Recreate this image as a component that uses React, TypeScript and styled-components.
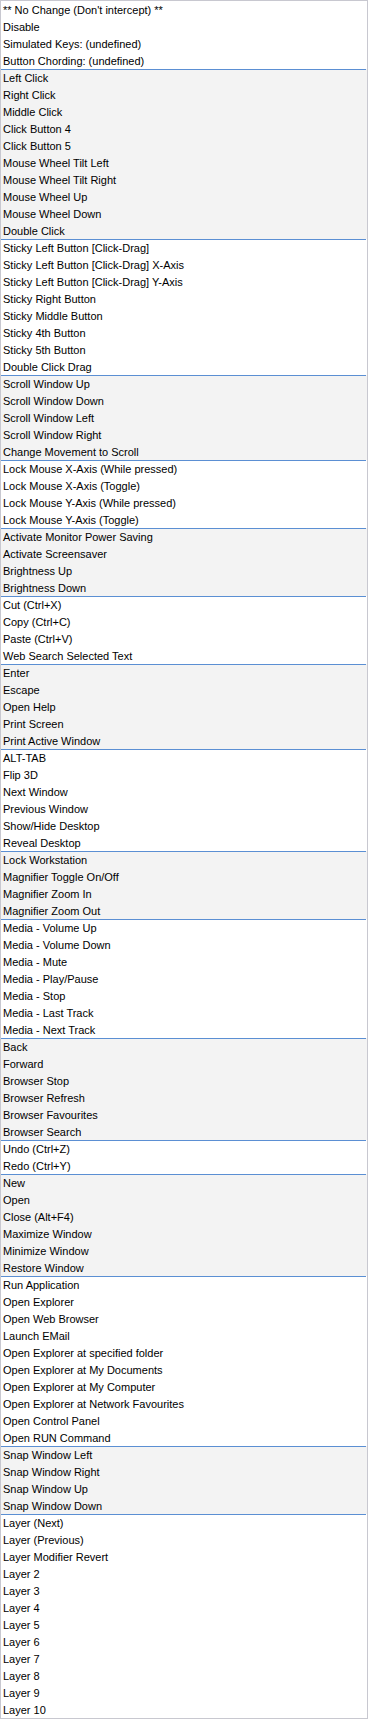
import React from 'react'
import styled, { createGlobalStyle } from 'styled-components'

const GlobalStyle = createGlobalStyle`
  html, body {
    margin: 0;
    padding: 0;
    background: #ffffff;
  }
`

const groups: string[][] = [
  ["** No Change (Don't intercept) **", 'Disable', 'Simulated Keys: (undefined)', 'Button Chording: (undefined)'],
  [
    'Left Click',
    'Right Click',
    'Middle Click',
    'Click Button 4',
    'Click Button 5',
    'Mouse Wheel Tilt Left',
    'Mouse Wheel Tilt Right',
    'Mouse Wheel Up',
    'Mouse Wheel Down',
    'Double Click',
  ],
  [
    'Sticky Left Button [Click-Drag]',
    'Sticky Left Button [Click-Drag] X-Axis',
    'Sticky Left Button [Click-Drag] Y-Axis',
    'Sticky Right Button',
    'Sticky Middle Button',
    'Sticky 4th Button',
    'Sticky 5th Button',
    'Double Click Drag',
  ],
  ['Scroll Window Up', 'Scroll Window Down', 'Scroll Window Left', 'Scroll Window Right', 'Change Movement to Scroll'],
  [
    'Lock Mouse X-Axis (While pressed)',
    'Lock Mouse X-Axis (Toggle)',
    'Lock Mouse Y-Axis (While pressed)',
    'Lock Mouse Y-Axis (Toggle)',
  ],
  ['Activate Monitor Power Saving', 'Activate Screensaver', 'Brightness Up', 'Brightness Down'],
  ['Cut (Ctrl+X)', 'Copy (Ctrl+C)', 'Paste (Ctrl+V)', 'Web Search Selected Text'],
  ['Enter', 'Escape', 'Open Help', 'Print Screen', 'Print Active Window'],
  ['ALT-TAB', 'Flip 3D', 'Next Window', 'Previous Window', 'Show/Hide Desktop', 'Reveal Desktop'],
  ['Lock Workstation', 'Magnifier Toggle On/Off', 'Magnifier Zoom In', 'Magnifier Zoom Out'],
  [
    'Media - Volume Up',
    'Media - Volume Down',
    'Media - Mute',
    'Media - Play/Pause',
    'Media - Stop',
    'Media - Last Track',
    'Media - Next Track',
  ],
  ['Back', 'Forward', 'Browser Stop', 'Browser Refresh', 'Browser Favourites', 'Browser Search'],
  ['Undo (Ctrl+Z)', 'Redo (Ctrl+Y)'],
  ['New', 'Open', 'Close (Alt+F4)', 'Maximize Window', 'Minimize Window', 'Restore Window'],
  [
    'Run Application',
    'Open Explorer',
    'Open Web Browser',
    'Launch EMail',
    'Open Explorer at specified folder',
    'Open Explorer at My Documents',
    'Open Explorer at My Computer',
    'Open Explorer at Network Favourites',
    'Open Control Panel',
    'Open RUN Command',
  ],
  ['Snap Window Left', 'Snap Window Right', 'Snap Window Up', 'Snap Window Down'],
  [
    'Layer (Next)',
    'Layer (Previous)',
    'Layer Modifier Revert',
    'Layer 2',
    'Layer 3',
    'Layer 4',
    'Layer 5',
    'Layer 6',
    'Layer 7',
    'Layer 8',
    'Layer 9',
    'Layer 10',
  ],
]

const ListBox = styled.div`
  width: 368px;
  box-sizing: border-box;
  border: 1px solid #c8c8d0;
  background: #ffffff;
  font-family: 'Liberation Sans', Arial, sans-serif;
  font-size: 11px;
  color: #000000;
`

const Group = styled.div<{ $shaded: boolean }>`
  display: flex;
  flex-direction: column;
  background: ${({ $shaded }) => ($shaded ? '#f3f3f3' : '#ffffff')};
`

const Item = styled.div<{ $divider: boolean }>`
  height: 17px;
  box-sizing: border-box;
  padding: ${({ $divider }) => ($divider ? '0 2px' : '1px 2px 0')};
  line-height: 16px;
  white-space: nowrap;
  border-top: ${({ $divider }) => ($divider ? '1px solid #5b8fd3' : 'none')};
  margin-right: 1px;
`

const App = () => (
  <>
    <GlobalStyle />
    <ListBox>
      {groups.map((items, g) => (
        <Group key={g} $shaded={g % 2 === 1}>
          {items.map((label, i) => (
            <Item key={label} $divider={g > 0 && i === 0}>
              {label}
            </Item>
          ))}
        </Group>
      ))}
    </ListBox>
  </>
)

export default App
